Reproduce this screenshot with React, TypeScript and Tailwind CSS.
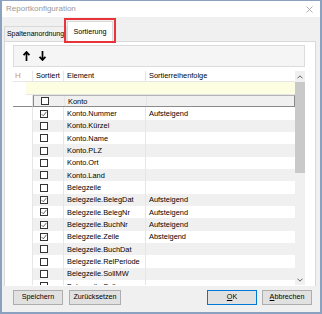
import React from 'react';

type Row = {
  element: string;
  checked: boolean;
  order?: string;
};

const ROWS: Row[] = [
  { element: 'Konto', checked: false },
  { element: 'Konto.Nummer', checked: true, order: 'Aufsteigend' },
  { element: 'Konto.Kürzel', checked: false },
  { element: 'Konto.Name', checked: false },
  { element: 'Konto.PLZ', checked: false },
  { element: 'Konto.Ort', checked: false },
  { element: 'Konto.Land', checked: false },
  { element: 'Belegzeile', checked: false },
  { element: 'Belegzeile.BelegDat', checked: true, order: 'Aufsteigend' },
  { element: 'Belegzeile.BelegNr', checked: true, order: 'Aufsteigend' },
  { element: 'Belegzeile.BuchNr', checked: true, order: 'Aufsteigend' },
  { element: 'Belegzeile.Zeile', checked: true, order: 'Absteigend' },
  { element: 'Belegzeile.BuchDat', checked: false },
  { element: 'Belegzeile.RelPeriode', checked: false },
  { element: 'Belegzeile.SollMW', checked: false },
  { element: 'Belegzeile.Soll', checked: false },
];

function CheckBox({ checked }: { checked: boolean }) {
  return (
    <span className="flex h-[8px] w-[8px] items-center justify-center border border-[#333333] bg-white">
      {checked && (
        <svg width="6" height="6" viewBox="0 0 6 6">
          <path d="M0.6 3.1 L2.3 4.8 L5.4 0.9" fill="none" stroke="#555555" strokeWidth="0.9" />
        </svg>
      )}
    </span>
  );
}

function DialogButton({
  children,
  primary = false,
  width,
}: {
  children: React.ReactNode;
  primary?: boolean;
  width: string;
}) {
  return (
    <button
      type="button"
      className={[
        'flex h-[15px] items-center justify-center bg-[#e1e1e1] text-[7.2px] text-black',
        width,
        primary ? 'border border-[#0078d7]' : 'border border-[#adadad]',
      ].join(' ')}
    >
      {children}
    </button>
  );
}

function GridRow({ row, index }: { row: Row; index: number }) {
  const focused = index === 0;
  const shaded = index % 2 === 0;
  return (
    <div className="flex h-[12.35px] shrink-0">
      <div
        className={[
          'w-[20px] shrink-0 border-r border-[#e6e6e6] bg-white',
          focused ? 'border-b border-b-[#8a8a8a]' : '',
        ].join(' ')}
      />
      <div
        className={[
          'flex flex-1',
          shaded ? 'bg-[#f0f0f0]' : 'bg-white',
          focused ? 'border border-[#8a8a8a] border-t-[#b4b4b4]' : '',
        ].join(' ')}
      >
        <div className="flex w-[31px] shrink-0 items-center border-r border-[#e6e6e6] pl-[7px]">
          <CheckBox checked={row.checked} />
        </div>
        <div className="flex w-[82px] shrink-0 items-center border-r border-[#e6e6e6] pl-[3px] whitespace-nowrap">
          {row.element}
        </div>
        <div className="flex flex-1 items-center pl-[3px] whitespace-nowrap">{row.order ?? ''}</div>
      </div>
    </div>
  );
}

function ScrollBar() {
  return (
    <div className="flex w-[10px] shrink-0 flex-col bg-[#f0f0f0]">
      <div className="flex h-[11px] shrink-0 items-center justify-center">
        <svg width="6" height="4" viewBox="0 0 6 4">
          <path d="M0.5 3.3 L3 0.8 L5.5 3.3" fill="none" stroke="#606060" strokeWidth="1" />
        </svg>
      </div>
      <div className="h-[91px] shrink-0 bg-[#c9c9c9]" />
      <div className="flex-1" />
      <div className="flex h-[11px] shrink-0 items-center justify-center">
        <svg width="6" height="4" viewBox="0 0 6 4">
          <path d="M0.5 0.7 L3 3.2 L5.5 0.7" fill="none" stroke="#606060" strokeWidth="1" />
        </svg>
      </div>
    </div>
  );
}

export default function App() {
  return (
    <div
      className="flex h-[314px] w-[322px] flex-col border-x-2 border-t border-b-2 border-[#8aa2bf] bg-[#f0f0f0] text-black"
      style={{ fontFamily: '"Liberation Sans", Arial, sans-serif' }}
    >
      {/* Titelleiste */}
      <div className="flex h-[16px] shrink-0 items-center justify-between bg-white pl-[4px] pr-[7px]">
        <span className="text-[8px] text-[#999999]">Reportkonfiguration</span>
        <svg width="7" height="7" viewBox="0 0 7 7">
          <path d="M0.5 0.5 L6.5 6.5 M6.5 0.5 L0.5 6.5" stroke="#9a9a9a" strokeWidth="0.8" />
        </svg>
      </div>

      {/* Tabs */}
      <div className="relative flex h-[24px] shrink-0 items-end pl-[2px]">
        <div className="flex h-[15px] w-[63px] items-center justify-center whitespace-nowrap border border-b-0 border-[#d9d9d9] bg-[#f0f0f0] text-[7px]">
          Spaltenanordnung
        </div>
        <div className="relative z-10 -mb-px flex h-[21px] w-[46px] items-start justify-center border border-b-0 border-[#d9d9d9] bg-white pt-[5px] text-[7.2px]">
          Sortierung
        </div>
        <div className="pointer-events-none absolute left-[62px] top-[1px] z-20 h-[25px] w-[52px] border-2 border-[#e8333a]" />
      </div>

      {/* Panel */}
      <div className="ml-[2px] mr-[4px] flex h-[245px] shrink-0 flex-col border border-b-0 border-[#d9d9d9] bg-white pl-[8px] pr-[10px] pt-[3px]">
        <div className="flex h-[22px] shrink-0 items-center gap-[9px] border border-[#dcdcdc] bg-[#f5f5f5] pl-[9px]">
          <svg width="7" height="10" viewBox="0 0 7 10">
            <path d="M3.5 10 L3.5 1.5 M0.6 4.2 L3.5 1 L6.4 4.2" fill="none" stroke="#000000" strokeWidth="1.7" />
          </svg>
          <svg width="7" height="10" viewBox="0 0 7 10">
            <path d="M3.5 0 L3.5 8.5 M0.6 5.8 L3.5 9 L6.4 5.8" fill="none" stroke="#000000" strokeWidth="1.7" />
          </svg>
        </div>

        <div className="mt-[4px] flex h-[214px] shrink-0 overflow-hidden text-[7.4px]">
          <div className="flex flex-1 flex-col overflow-hidden">
            <div className="flex h-[11px] shrink-0 border-b border-[#e6e6e6] bg-white">
              <div className="flex w-[20px] shrink-0 items-center border-r border-[#e6e6e6] pl-[2px] text-[8px] text-[#d29a4e]">
                H
              </div>
              <div className="flex w-[31px] shrink-0 items-center justify-center border-r border-[#e6e6e6]">
                Sortiert
              </div>
              <div className="flex w-[82px] shrink-0 items-center border-r border-[#e6e6e6] pl-[3px]">
                Element
              </div>
              <div className="flex flex-1 items-center pl-[3px]">Sortierreihenfolge</div>
            </div>
            <div className="flex h-[13px] shrink-0">
              <div className="w-[13px] shrink-0 bg-white" />
              <div className="flex-1 border-b border-[#e6e6e6] bg-[#fdfde2]" />
            </div>
            {ROWS.map((row, index) => (
              <GridRow key={row.element} row={row} index={index} />
            ))}
          </div>
          <ScrollBar />
        </div>
      </div>

      {/* Buttons */}
      <div className="mt-[4px] flex shrink-0 items-center pl-[11px] pr-[8px]">
        <div className="flex gap-[6px]">
          <DialogButton width="w-[50px]">Speichern</DialogButton>
          <DialogButton width="w-[52px]">Zurücksetzen</DialogButton>
        </div>
        <div className="ml-auto flex gap-[5px]">
          <DialogButton width="w-[50px]" primary>
            <span className="underline">O</span>K
          </DialogButton>
          <DialogButton width="w-[50px]">
            <span className="underline">A</span>bbrechen
          </DialogButton>
        </div>
      </div>
    </div>
  );
}
